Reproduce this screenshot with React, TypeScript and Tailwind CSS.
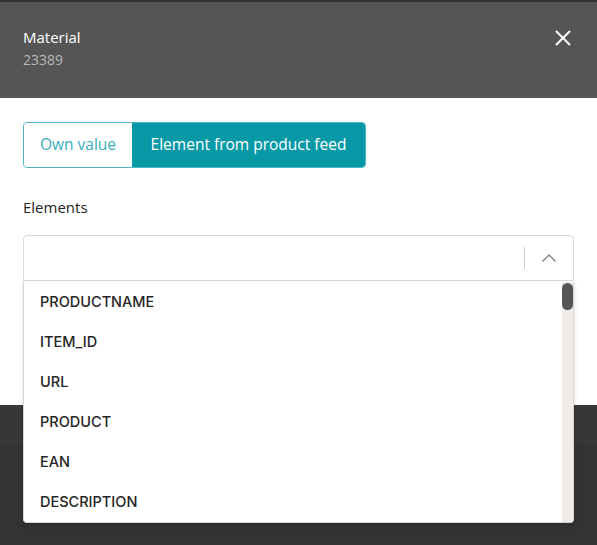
import React from "react";

const items = ["PRODUCTNAME", "ITEM_ID", "URL", "PRODUCT", "EAN", "DESCRIPTION"];

export default function App() {
    return (
        <div
            className="relative h-[545px] w-[597px] overflow-hidden bg-[#333333] pt-[2px]"
            style={{ fontFamily: '"Open Sans", "Noto Sans", sans-serif' }}
        >
            <div className="rounded-t-[4px] bg-white">
                <div className="flex h-[96px] items-start justify-between bg-[#555555] pl-[23px] pr-[25px] pt-[25px]">
                    <div className="flex flex-col">
                        <div className="text-[15px] leading-[20px] text-white">Material</div>
                        <div className="mt-[3px] text-[14px] leading-[20px] text-[#b9b9b9]">23389</div>
                    </div>
                    <button className="mt-[2px] text-white">
                        <svg width="18" height="18" viewBox="0 0 18 18" fill="none" stroke="currentColor" strokeWidth="2">
                            <path d="M2 2 L16 16 M16 2 L2 16" />
                        </svg>
                    </button>
                </div>
                <div className="h-[307px] px-[23px] pt-[24px]">
                    <div className="flex h-[46px] w-[343px] overflow-hidden rounded-[4px] border border-[#4bb7c3]">
                        <button className="w-[108px] bg-white text-[15.5px] text-[#3aaebb]">Own value</button>
                        <button className="flex-1 bg-[#0899a7] text-[15.5px] text-white">Element from product feed</button>
                    </div>
                    <div className="mt-[29px] text-[15px] leading-[20px] text-[#222222]">Elements</div>
                    <div className="mt-[18px] flex h-[46px] items-center rounded-t-[4px] border border-[#dcd8d3] bg-white">
                        <div className="flex-1" />
                        <div className="h-[22px] w-px bg-[#cfcbc6]" />
                        <div className="flex w-[48px] justify-center text-[#8a8a8a]">
                            <svg width="16" height="10" viewBox="0 0 16 10" fill="none" stroke="currentColor" strokeWidth="1.5">
                                <path d="M1.5 8.5 L8 2 L14.5 8.5" />
                            </svg>
                        </div>
                    </div>
                </div>
            </div>
            <div className="h-[40px] bg-[#373737]" />

            <div className="absolute left-[23px] top-[282px] flex h-[241px] w-[551px] overflow-hidden rounded-b-[4px] border border-t-0 border-[#d9d5d0] bg-white shadow-[0_2px_4px_rgba(0,0,0,0.15)]">
                <div className="flex-1 pt-[-1px]">
                    {items.map((it) => (
                        <div
                            key={it}
                            className="flex h-[40px] items-center pb-[1px] pl-[16px] text-[14.5px] font-medium text-[#262626]"
                            style={{ fontFamily: 'Inter, "Noto Sans", sans-serif' }}
                        >
                            {it}
                        </div>
                    ))}
                </div>
                <div className="w-[11px] bg-[#efece7] pt-[1px]">
                    <div className="h-[27px] w-[11px] rounded-full bg-[#555555]" />
                </div>
            </div>
        </div>
    );
}
